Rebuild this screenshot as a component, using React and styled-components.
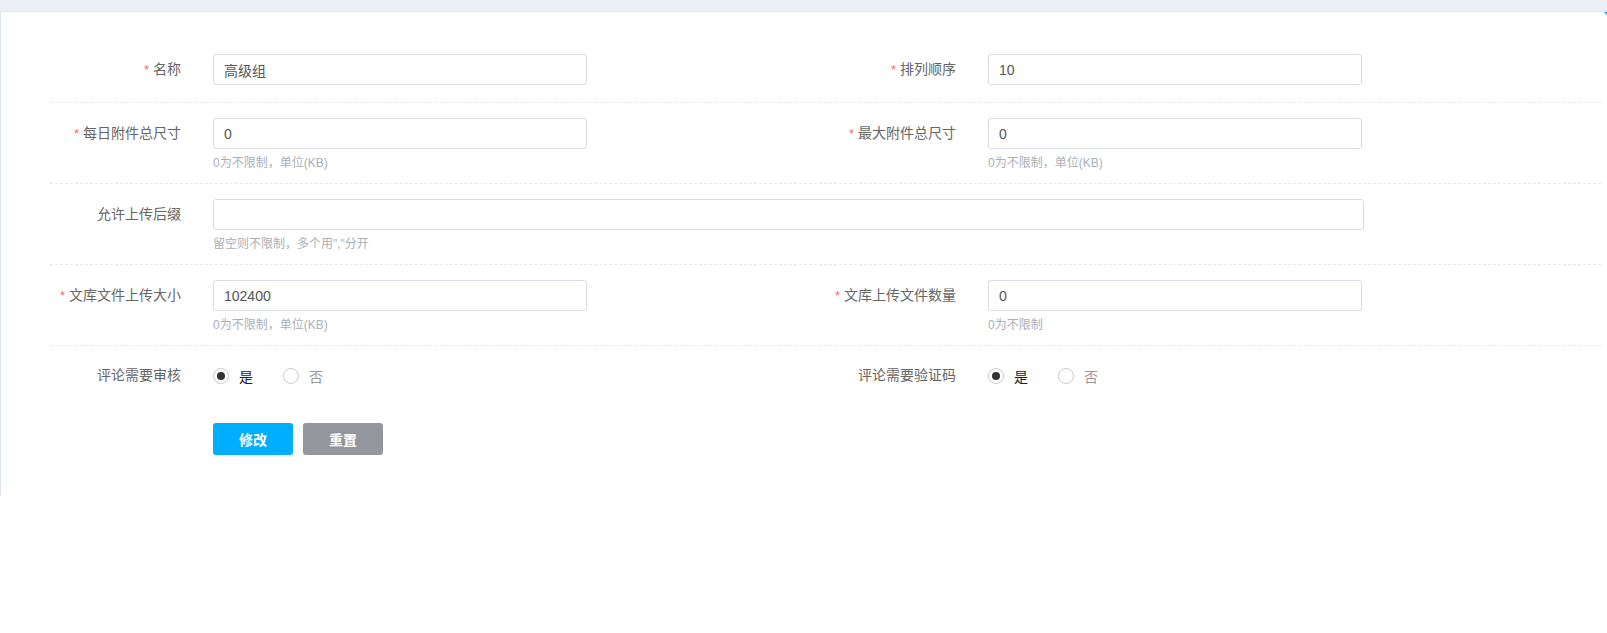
import React from "react";
import styled, { createGlobalStyle } from "styled-components";

const GlobalStyle = createGlobalStyle`
  html, body {
    margin: 0;
    padding: 0;
    background: #ffffff;
  }
  body {
    font-family: "Liberation Sans", "Noto Sans CJK SC", sans-serif;
    font-size: 14px;
    color: #666;
  }
  * { box-sizing: border-box; }
`;

const TopBar = styled.div`
  height: 12px;
  background: #ebeef4;
  border-bottom: 1px solid #e0e6ef;
`;

const Panel = styled.div`
  position: relative;
  border-left: 1px solid #dde4ee;
  padding: 27px 6px 41px 49px;
  background: #fff;
`;

const CornerMark = styled.span`
  position: absolute;
  top: 0;
  right: 0;
  width: 0;
  height: 0;
  border-top: 3px solid #1a9cff;
  border-left: 3px solid transparent;
`;

const Row = styled.div`
  display: grid;
  grid-template-columns: ${(p) => (p.$wide ? "1fr" : "775px 775px")};
  padding: ${(p) => (p.$last ? "14px 0 18px" : "15px 0 17px")};
  border-bottom: ${(p) => (p.$last ? "none" : "1px dashed #e6e8ec")};
`;

const Field = styled.div`
  display: flex;
  align-items: flex-start;
`;

const Label = styled.label`
  width: 131px;
  margin-right: 32px;
  flex: none;
  text-align: right;
  line-height: 31px;
  font-size: 14px;
  color: #666;
  white-space: nowrap;
`;

const Star = styled.span`
  color: #f56c6c;
  font-size: 13px;
  margin-right: 4px;
`;

const Control = styled.div`
  display: flex;
  flex-direction: column;
`;

const Input = styled.input`
  width: ${(p) => (p.$wide ? "1151px" : "374px")};
  height: 31px;
  border: 1px solid #dadde6;
  border-radius: 3px;
  padding: 0 10px;
  font-family: inherit;
  font-size: 14px;
  color: #555;
  outline: none;
  background: #fff;
`;

const Help = styled.div`
  margin: 8px 0 -4px;
  font-size: 12px;
  line-height: 13px;
  color: #aab0b8;
`;

const RadioGroup = styled.div`
  display: flex;
  align-items: center;
  height: 31px;
  gap: 30px;
`;

const RadioOption = styled.label`
  display: flex;
  align-items: center;
  gap: 10px;
  font-size: 14px;
  color: ${(p) => (p.$checked ? "#222" : "#999")};
  cursor: pointer;
`;

const RadioCircle = styled.span`
  width: 16px;
  height: 16px;
  border-radius: 50%;
  border: 1px solid #c9cbd0;
  display: flex;
  align-items: center;
  justify-content: center;
  background: #fff;
  &::after {
    content: "";
    width: 8px;
    height: 8px;
    border-radius: 50%;
    background: ${(p) => (p.$checked ? "#333" : "transparent")};
  }
`;

const Actions = styled.div`
  display: flex;
  gap: 10px;
  padding-left: 163px;
  margin-top: 14px;
`;

const Button = styled.button`
  width: 80px;
  height: 32px;
  border: none;
  border-radius: 3px;
  background: ${(p) => (p.$variant === "primary" ? "#00aeff" : "#94969d")};
  color: #fff;
  font-family: inherit;
  font-size: 14px;
  font-weight: bold;
  cursor: pointer;
`;

function TextField({ label, required, value, help, wide }) {
  return (
    <Field>
      <Label>
        {required && <Star>*</Star>}
        {label}
      </Label>
      <Control>
        <Input $wide={wide} defaultValue={value} />
        {help && <Help>{help}</Help>}
      </Control>
    </Field>
  );
}

function RadioField({ label }) {
  return (
    <Field>
      <Label>{label}</Label>
      <RadioGroup>
        <RadioOption $checked>
          <RadioCircle $checked />
          是
        </RadioOption>
        <RadioOption>
          <RadioCircle />
          否
        </RadioOption>
      </RadioGroup>
    </Field>
  );
}

export default function App() {
  return (
    <>
      <GlobalStyle />
      <TopBar />
      <Panel>
        <CornerMark />
        <Row>
          <TextField label="名称" required value="高级组" />
          <TextField label="排列顺序" required value="10" />
        </Row>
        <Row>
          <TextField label="每日附件总尺寸" required value="0" help="0为不限制，单位(KB)" />
          <TextField label="最大附件总尺寸" required value="0" help="0为不限制，单位(KB)" />
        </Row>
        <Row $wide>
          <TextField label="允许上传后缀" value="" wide help={'留空则不限制，多个用","分开'} />
        </Row>
        <Row>
          <TextField label="文库文件上传大小" required value="102400" help="0为不限制，单位(KB)" />
          <TextField label="文库上传文件数量" required value="0" help="0为不限制" />
        </Row>
        <Row $last>
          <RadioField label="评论需要审核" />
          <RadioField label="评论需要验证码" />
        </Row>
        <Actions>
          <Button $variant="primary">修改</Button>
          <Button>重置</Button>
        </Actions>
      </Panel>
    </>
  );
}
